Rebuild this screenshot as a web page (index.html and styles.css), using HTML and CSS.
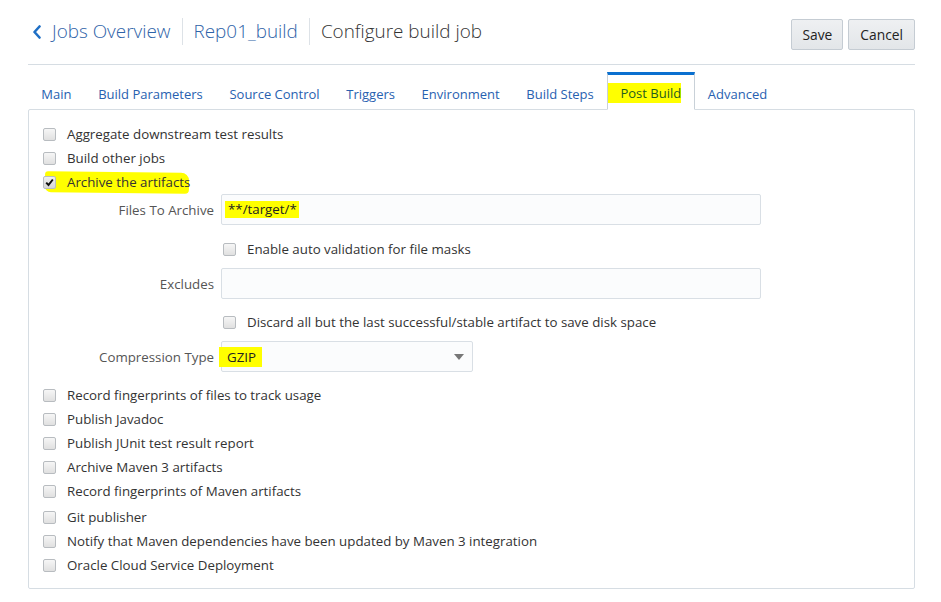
FILE: index.html
```html
<!DOCTYPE html>
<html>
<head>
<meta charset="utf-8">
<link rel="stylesheet" href="styles.css">
</head>
<body>
<div class="page">
  <header class="header">
    <nav class="crumbs">
      <a class="crumb link"><svg class="chev" width="10" height="14" viewBox="0 0 10 14"><path d="M7.5 1.5 L2.5 7 L7.5 12.5" fill="none" stroke="#1f6fc5" stroke-width="2.6" stroke-linecap="round" stroke-linejoin="round"/></svg>Jobs Overview</a>
      <span class="sep"></span>
      <a class="crumb link">Rep01_build</a>
      <span class="sep"></span>
      <span class="crumb current">Configure build job</span>
    </nav>
    <div class="actions">
      <button class="btn">Save</button>
      <button class="btn">Cancel</button>
    </div>
  </header>

  <ul class="tabs">
    <li class="tab">Main</li>
    <li class="tab">Build Parameters</li>
    <li class="tab">Source Control</li>
    <li class="tab">Triggers</li>
    <li class="tab">Environment</li>
    <li class="tab">Build Steps</li>
    <li class="tab active"><span class="hl hl-tab">Post Build</span></li>
    <li class="tab">Advanced</li>
  </ul>

  <section class="panel">
    <div class="row"><span class="cb"></span><span class="lbl">Aggregate downstream test results</span></div>
    <div class="row"><span class="cb"></span><span class="lbl">Build other jobs</span></div>
    <div class="row row-hl"><span class="hl hl-row"></span><span class="cb checked"><svg width="9" height="9" viewBox="0 0 9 9"><path d="M1.2 4.6 L3.5 7 L7.8 1.5" fill="none" stroke="#111" stroke-width="2"/></svg></span><span class="lbl">Archive the artifacts</span></div>

    <div class="field">
      <label class="flabel">Files To Archive</label>
      <div class="input"><span class="hl hl-val">**/target/*</span></div>
    </div>
    <div class="subrow sub1"><span class="cb"></span><span class="lbl">Enable auto validation for file masks</span></div>
    <div class="field f2">
      <label class="flabel">Excludes</label>
      <div class="input"></div>
    </div>
    <div class="subrow sub2"><span class="cb"></span><span class="lbl">Discard all but the last successful/stable artifact to save disk space</span></div>
    <div class="field f3">
      <label class="flabel">Compression Type</label>
      <div class="input select"><span class="hl hl-sel">GZIP</span><span class="caret"></span></div>
    </div>

    <div class="row r-after"><span class="cb"></span><span class="lbl">Record fingerprints of files to track usage</span></div>
    <div class="row"><span class="cb"></span><span class="lbl">Publish Javadoc</span></div>
    <div class="row"><span class="cb"></span><span class="lbl">Publish JUnit test result report</span></div>
    <div class="row"><span class="cb"></span><span class="lbl">Archive Maven 3 artifacts</span></div>
    <div class="row"><span class="cb"></span><span class="lbl">Record fingerprints of Maven artifacts</span></div>
    <div class="row r-git"><span class="cb"></span><span class="lbl">Git publisher</span></div>
    <div class="row"><span class="cb"></span><span class="lbl">Notify that Maven dependencies have been updated by Maven 3 integration</span></div>
    <div class="row"><span class="cb"></span><span class="lbl">Oracle Cloud Service Deployment</span></div>
  </section>
</div>
</body>
</html>
```
FILE: styles.css
```css
* { box-sizing: border-box; }
html, body { margin: 0; padding: 0; background: #fff; }
body {
  font-family: "Open Sans", "Noto Sans", "Liberation Sans", sans-serif;
  font-size: 13.3px;
  color: #333;
}
.page { padding: 0 26px 0 28px; }

.header {
  height: 65px;
  border-bottom: 1px solid #d6dde3;
  display: flex;
  align-items: flex-start;
  justify-content: space-between;
  padding-top: 18px;
}
.crumbs { display: flex; align-items: center; height: 27px; }
.crumb { font-size: 18.9px; font-weight: 300; line-height: 27px; white-space: nowrap; }
.crumb.link { color: #2f63a8; display: flex; align-items: center; }
.crumb.current { color: #333; }
.chev { margin: 0 10px 0 4px; }
.sep { width: 1px; height: 27px; background: #dde2e7; margin: 0 11px; }
.actions { display: flex; gap: 5px; padding-top: 1px; }
.btn {
  font-family: inherit;
  font-size: 13.8px;
  color: #222;
  height: 31px;
  padding: 0 11px;
  border: 1px solid #c5ccd3;
  border-radius: 2px;
  background: linear-gradient(#eef0f2, #e3e6e9);
}
.btn:first-child { padding: 0 10px; }

.tabs {
  list-style: none;
  margin: 7px 0 0;
  padding: 0;
  display: flex;
  height: 38px;
  position: relative;
  z-index: 1;
}
.tab {
  padding: 10px 12.33px 0;
  border: 1px solid transparent;
  border-top-width: 3px;
  color: #2861b0;
  font-size: 13px;
  white-space: nowrap;
}
.tab.active {
  border-color: #0a70d0 #c9d1d8 #fff #c9d1d8;
  background: #fff;
  padding: 8px 12.33px 0;
}
.hl { background: #ffff00; }
.hl-tab { display: inline-block; margin-left: -12px; padding: 1px 0 1px 12px; color: #1f5c1f; }

.panel {
  border: 1px solid #d6dde3;
  border-radius: 2px;
  margin-top: -1px;
  padding: 12px 14px 11px;
}
.row { display: flex; align-items: center; height: 24px; position: relative; }
.row-hl .cb, .row-hl .lbl { position: relative; }
.hl-row {
  position: absolute;
  left: 2px; top: 2px;
  width: 144px; height: 21px;
  border-radius: 3px 8px 4px 6px;
  transform: rotate(0.6deg);
}
.cb {
  width: 13px; height: 13px;
  border: 1px solid #b8bcc0;
  border-radius: 2px;
  background: linear-gradient(#f6f6f6, #e0e0e0);
  margin-right: 11px;
  flex: none;
  display: flex; align-items: center; justify-content: center;
}
.cb.checked { background: linear-gradient(#f0f0f0, #d6d6d6); }
.lbl { white-space: nowrap; }

.field { display: flex; align-items: center; height: 31px; }
.flabel { width: 178px; text-align: right; padding-right: 7px; color: #555; white-space: nowrap; }
.input {
  width: 540px; height: 31px;
  border: 1px solid #d9dfe5;
  border-radius: 2px;
  background: #fbfcfd;
  display: flex; align-items: center;
  padding-left: 3px;
}
.hl-val { padding: 0 2px 0 3px; color: #222; line-height: 17px; }
.select { width: 252px; justify-content: space-between; padding-right: 8px; padding-left: 0; }
.hl-sel { margin-left: -3px; padding: 1px 6px 1px 8px; color: #222; line-height: 18px; }
.caret { width: 0; height: 0; border-left: 5px solid transparent; border-right: 5px solid transparent; border-top: 6px solid #777; }

.subrow { display: flex; align-items: center; height: 24px; padding-left: 180px; }
.sub1 { margin-top: 12px; }
.f2 { margin-top: 7px; }
.sub2 { margin-top: 11px; }
.f3 { margin-top: 7px; }
.r-after { margin-top: 11px; }
.r-git { margin-top: 2px; }
```
